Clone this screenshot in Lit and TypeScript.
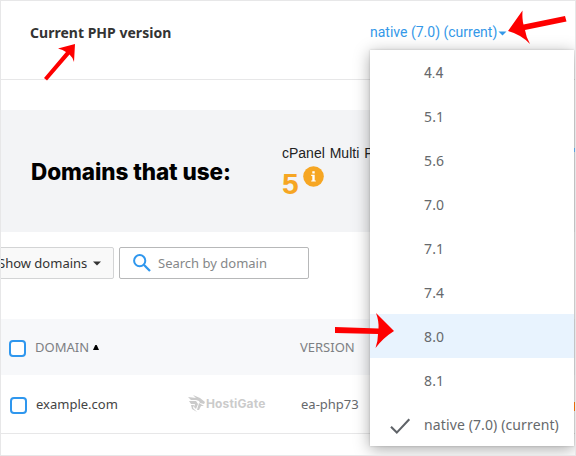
import { LitElement, html, css, svg } from "lit";
import { customElement } from "lit/decorators.js";
import { classMap } from "lit/directives/class-map.js";

const VERSIONS = ["4.4", "5.1", "5.6", "7.0", "7.1", "7.4", "8.0", "8.1", "native (7.0) (current)"];

@customElement("version-menu")
class VersionMenu extends LitElement {
  static styles = css`
    :host { display: block; width: 204px; background: #fff; box-shadow: 0 3px 15px rgba(0, 0, 0, 0.34), 0 0 2px rgba(0, 0, 0, 0.18); }
    .item { box-sizing: border-box; display: flex; align-items: center; height: 44px; font: 14px "Noto Sans", sans-serif; letter-spacing: 0.12px; color: #66696c; white-space: nowrap; }
    .mark { width: 54px; height: 44px; flex: none; }
    .first { font-family: Roboto, sans-serif; letter-spacing: 0; }
    .first .label { padding-top: 2px; }
    .active { background: #e8f3fe; }
  `;
  render() {
    return VERSIONS.map((v, i) => html`
      <div class=${classMap({ item: true, first: i === 0, active: v === "8.0" })}>
        <svg class="mark" viewBox="0 0 54 44">
          ${i === VERSIONS.length - 1 ? svg`<path d="M21 24.8L26.8 30.6L39.3 17.2" fill="none" stroke="#5f6368" stroke-width="2.1"/>` : ""}
        </svg>
        <span class="label">${v}</span>
      </div>`);
  }
}

@customElement("app-root")
class AppRoot extends LitElement {
  static styles = css`
    :host { display: block; position: relative; box-sizing: border-box; width: 576px; height: 456px; overflow: hidden; background: #fff; border: 1px solid #e7e7e8; font: 13px "Noto Sans", sans-serif; white-space: nowrap; }
    * { box-sizing: border-box; }
    .current { display: flex; height: 79px; padding: 22px 0 0 29px; border-bottom: 1px solid #e7e7e8; }
    .title { width: 340px; font: bold 14px/20px "Noto Sans", sans-serif; color: #333; letter-spacing: 0.02px; }
    .link { display: flex; font: 14px/18px Roboto, sans-serif; color: #3498e8; }
    .link svg { margin: 8px 0 0 1px; }
    .stats { display: flex; height: 122px; margin-top: 30px; background: #f3f4f6; }
    .heading { width: 281px; padding: 47px 0 0 30px; font: 800 22.5px/30px Inter, sans-serif; letter-spacing: -0.08px; color: #000; }
    .stat { padding-top: 34px; font: 14px/18px "Liberation Sans", sans-serif; color: #222; word-spacing: 1px; }
    .count { display: flex; gap: 4px; color: #f6a623; font: bold 30px/44px "Liberation Sans", sans-serif; }
    .count svg { margin-top: 4px; }
    .tools { display: flex; gap: 5px; height: 32px; margin-top: 15px; }
    .filter { display: flex; align-items: center; width: 114px; margin-left: -1px; background: #f9f9f9; border: 1px solid #d3d4d5; border-radius: 0 2px 2px 0; color: #333; }
    .filter svg { margin-left: 6px; }
    .filter span { margin-left: -3px; }
    .search { display: flex; align-items: center; gap: 7px; width: 190px; padding-left: 13px; background: #fff; border: 1px solid #b7b8b9; border-radius: 2px; color: #858789; }
    .row { display: grid; grid-template-columns: 35px 152px 113px 1fr; align-items: center; height: 59px; border-bottom: 1px solid #e7e7e8; color: #66696c; }
    .head { height: 56px; margin-top: 40px; background: #f7f8fa; border: 0; color: #7d8083; grid-template-columns: 34px 152px 113px 1fr; }
    .box { width: 17px; height: 17px; border: 2px solid #2f97ee; border-radius: 4px; background: #fff; }
    .row .box { margin: 2px 0 0 9px; }
    .head .box { margin: 2px 0 0 8px; }
    .domain { color: #444; }
    .sort { display: flex; align-items: center; gap: 4px; }
    .brand { display: flex; align-items: center; gap: 1px; margin-top: -2px; font: 700 12px Inter, sans-serif; color: #cbcbcb; letter-spacing: 0.15px; }
    version-menu { position: absolute; left: 369px; top: 49px; }
    .overlay { position: absolute; left: -1px; top: -1px; }
  `;
  render() {
    return html`
      <div class="current">
        <div class="title">Current PHP version</div>
        <div class="link">native (7.0) (current)<svg width="9" height="5"><path d="M0.5 0.5H8.5L4.5 4.5Z" fill="#3498e8"/></svg></div>
      </div>
      <div class="stats">
        <div class="heading">Domains that use:</div>
        <div class="stat">cPanel Multi PHP
          <div class="count">5<svg width="21" height="21"><circle cx="10.5" cy="10.5" r="10.3" fill="#f6a623"/><path d="M9.3 5.3h2.4v2.1H9.3zM8.2 8.8h3.5v5.6h1.1v1.2H8.2v-1.2h1.1V10H8.2z" fill="#fff"/></svg></div>
        </div>
      </div>
      <div class="tools">
        <div class="filter"><span>Show domains</span><svg width="8" height="5"><path d="M0 0.5H8L4 4.5Z" fill="#333"/></svg></div>
        <div class="search"><svg width="18" height="18"><circle cx="6.7" cy="6.7" r="5.6" fill="none" stroke="#2f97ee" stroke-width="2"/><path d="M10.8 10.8L17 17" stroke="#2f97ee" stroke-width="2.3"/></svg>Search by domain</div>
      </div>
      <div class="row head">
        <i class="box"></i>
        <span class="sort">DOMAIN<svg width="6" height="5"><path d="M0 5H6L3.7 0H2.3Z" fill="#000"/></svg></span>
        <span></span><span>VERSION</span>
      </div>
      <div class="row">
        <i class="box"></i>
        <span class="domain">example.com</span>
        <span class="brand"><svg width="17" height="17" viewBox="0 0 17 17" fill="#cbcbcb"><path d="M0 2L8 3L5 0L12 3L17 7L16 9L12 8L11 6L8 5L3 5ZM1 6L8 6L10 9L8 14L6 12L7 9L3 9ZM3 10L6 10L5 13L9 17L4 14ZM11 8L16 11L13 11L11 15L9 15Z"/></svg>HostiGate</span>
        <span>ea-php73</span>
      </div>
      <version-menu></version-menu>
      <svg class="overlay" width="576" height="456">
        <g fill="#fe0000">
          <path d="M75 44L58 48.5Q63 49.5 66 52L44 78L47 80.5L69.5 54.5Q72.5 57 74 62Z"/>
          <path d="M508 31L522.5 10.5Q522 19 523.5 24.5L565 16L566.5 21.5L525 30Q526 37 530 44Q521 34.5 508 31Z"/>
          <path d="M394 331L376 313Q379 321 378.5 328.5L335 327V333L378 334Q378 341 375.5 348Q383 338 394 331Z"/>
        </g>
        <path d="M574 402h1v9h-1z" fill="#e8690b"/>
        <path d="M574 148h1v4h-1z" fill="#5c9fdd"/>
      </svg>`;
  }
}
